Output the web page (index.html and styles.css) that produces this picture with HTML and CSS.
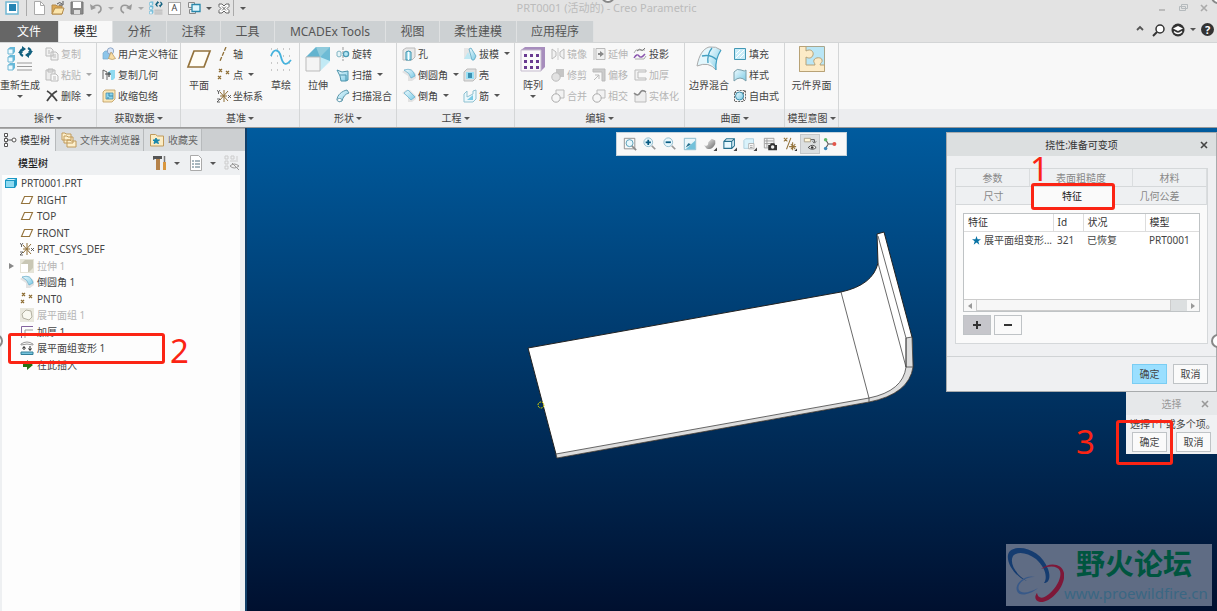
FILE: index.html
```html
<!DOCTYPE html>
<html lang="zh-CN">
<head>
    <meta charset="UTF-8">
    <meta name="viewport" content="width=device-width, initial-scale=1.0">
    <title>PRT0001 (活动的) - Creo Parametric</title>
    <link rel="stylesheet" href="styles.css">
</head>
<body>
    <!-- Shared icons -->
    <svg class="sprite" aria-hidden="true">
        <defs>
            <linearGradient id="sky" x1="0" y1="0" x2="1" y2="1"><stop offset="0" stop-color="#f0fbfe"/><stop offset="1" stop-color="#7ccbe6"/></linearGradient>
            <linearGradient id="metal" x1="0" y1="0" x2="1" y2="1"><stop offset="0" stop-color="#fff"/><stop offset="1" stop-color="#666"/></linearGradient>
        </defs>
        <symbol id="regen" viewBox="0 0 26 26">
            <path d="M1 3l2-2h5v5l-2 2H1zM1 11l2-2h5v5l-2 2H1zM1 19l2-2h5v5l-2 2H1z" fill="#66b9da"/>
            <path d="M1 3h5v5H1zM1 11h5v5H1zM1 19h5v5H1z" fill="#eefaff" stroke="#6fb7d4"/>
            <path d="M10 17h15M10 20.500h15M10 24h15" stroke="#999" stroke-width="1.200"/>
            <path d="M16 10c-4-2-3-6 0-7M21 2c4 2 3 6 0 7" fill="none" stroke="#12607f" stroke-width="2.200"/>
            <path d="M15 0l4 3-4 3zM22 6l-4 3 4 3zM11 7h5l-2.500-3zM21 5h5l-2.500 3z" fill="#12607f"/>
        </symbol>
        <symbol id="copy" viewBox="0 0 14 14"><path d="M1 1h5l2 2v6H1zM6 5h5l2 2v6H6z" fill="#f2f2f2" stroke="#bbb"/><path d="M8 8h3M8 10h3M3 4h2M3 6h2" stroke="#bbb"/></symbol>
        <symbol id="paste" viewBox="0 0 14 14"><path d="M1 2h9v10H1zM3 1h5v3H3z" fill="#ececec" stroke="#bbb"/><path d="M6 6h5l2 2v5H6z" fill="#fafafa" stroke="#bbb"/><path d="M8 9h3M8 11h3" stroke="#bbb"/></symbol>
        <symbol id="delete" viewBox="0 0 14 14"><path d="M2 2c4 2 7 6 10 10M12 2C8 4 4 9 2 12" fill="none" stroke="#444" stroke-width="1.800"/></symbol>
        <symbol id="udf" viewBox="0 0 14 14"><path d="M1 6l2-2h5v6l-2 2H1z" fill="#8cc5ea" stroke="#7aabca" stroke-width=".7"/><circle cx="8.500" cy="4" r="3.200" fill="#d9e5f6" stroke="#7b97bb" stroke-width=".8"/><path d="M9 5l4.500 6.500q-3 2-7 0z" fill="#f8dca3" stroke="#b5925a" stroke-width=".7"/></symbol>
        <symbol id="copygeom" viewBox="0 0 14 14"><path d="M1 2v9M1 2l4 2v8" fill="none" stroke="#666"/><path d="M6 4l3-2h4v8l-2 2H9V7H6z" fill="#8fdaf0"/><path d="M3 6h6M7 4v5" stroke="#444" stroke-width="1.200" fill="none"/></symbol>
        <symbol id="shrink" viewBox="0 0 14 14"><path d="M1 3l2-2h10v9l-3 3H1z" fill="#fae7b8" stroke="#bd9b5a" stroke-width=".8"/><path d="M4 4h7v6H4z" fill="#8bd4ed" stroke="#4891ae" stroke-width=".8"/><path d="M7 4v3h4M6 10V8" stroke="#3a87a6" fill="none"/></symbol>
        <symbol id="plane" viewBox="0 0 26 26"><path d="M8 5h16l-6 16H2z" fill="#fffdf6" stroke="#94733c" stroke-width="1.700"/></symbol>
        <symbol id="miniplane" viewBox="0 0 14 14"><path d="M4.500 3.500h8l-3 7h-8z" fill="#fff" stroke="#94733c" stroke-width="1.100"/></symbol>
        <symbol id="axis" viewBox="0 0 14 14"><path d="M9 0L3 14" stroke="#8f6f36" stroke-width="1.300" stroke-dasharray="4 1.500"/></symbol>
        <symbol id="points" viewBox="0 0 14 14"><path d="M2 1l3 3m0-3L2 4M9 3l3 3m0-3L9 6M1 8l3 3m0-3l-3 3" stroke="#8f6f36" stroke-width="1.300"/></symbol>
        <symbol id="csys" viewBox="0 0 14 14"><path d="M7 1v12M3 3l8 9M11 2L3 11M3 7h7" stroke="#8f6f36" stroke-width="1"/><path d="M0 1l1.500 2L3 1M1.500 3v2M0 10h3l-3 3h3M11 6l3 3m0-3l-3 3" fill="none" stroke="#444" stroke-width=".8"/></symbol>
        <symbol id="sketch" viewBox="0 0 26 26"><path d="M3 3h20M3 10h20M3 17h20M3 24h20" stroke="#999" stroke-width="1" stroke-dasharray="1 5"/><path d="M3 10c3-8 8-7 10 1s5 9 10 3" fill="none" stroke="#45b2dd" stroke-width="1.800"/></symbol>
        <symbol id="extrude" viewBox="0 0 26 26"><path d="M1 11L11 1h14v15L15 25H1z" fill="#d9f2fa"/><path d="M1 11L11 1h14L15 11z" fill="#64b4cf"/><path d="M11 1h14v14l-10-4z" fill="#90cbdc"/><path d="M25 3v12L15 25V11z" fill="#c2eaf5"/><path d="M15 11L25 1v14z" fill="#6ebbd5"/><path d="M1 11h14v14H1z" fill="#f4f4f4" stroke="#bbb"/></symbol>
        <symbol id="revolve" viewBox="0 0 14 14"><path d="M7 0v14" stroke="#999" stroke-dasharray="3 1"/><path d="M1 5q2-2 4 0v4q-2 2-4 0z" fill="#e5f5f8" stroke="#84b5c3"/><circle cx="10" cy="7" r="2.600" fill="#b5e6f4" stroke="#4b9ab4" stroke-width="1.300"/></symbol>
        <symbol id="sweep" viewBox="0 0 14 14"><path d="M1 2l5 2 6-1v9l-2 1H5L4 8z" fill="url(#sky)" stroke="#4c93ab"/><path d="M4 7h6v6" fill="none" stroke="#4c93ab"/></symbol>
        <symbol id="blend" viewBox="0 0 14 14"><path d="M1 11c0-5 5-9 10-10l2 3C9 5 7 8 6 12q-3 2-5-1z" fill="url(#sky)" stroke="#5b96aa"/><ellipse cx="3.500" cy="11" rx="2.500" ry="1.500" fill="#fff" stroke="#5b96aa" stroke-width=".8"/></symbol>
        <symbol id="hole" viewBox="0 0 14 14"><path d="M1 3l3-2h9v9l-3 3H1z" fill="#e9e9e9" stroke="#bbb"/><path d="M4 5q2.500-2 5 0v8H4z" fill="#b4e7f5" stroke="#3b91ac"/><path d="M6.500 5v8" stroke="#fff"/></symbol>
        <symbol id="round" viewBox="0 0 14 14"><path d="M0 4l4-3h5l5 5v4l-4 3H6V8z" fill="#e2e2e2"/><path d="M2 2q9-3 11 6l-4 2Q8 5 2 2z" fill="url(#sky)" stroke="#61aecb" stroke-width=".7"/></symbol>
        <symbol id="chamfer" viewBox="0 0 14 14"><path d="M0 4l4-3h4l6 6v3l-4 3H6V8z" fill="#e2e2e2"/><path d="M2 4l4-3 7 7-4 3z" fill="url(#sky)" stroke="#61aecb" stroke-width=".7"/></symbol>
        <symbol id="draft" viewBox="0 0 14 14"><path d="M1 1h6l6 9v2H1z" fill="#e6e6e6"/><path d="M1 12l4-7 4 7z" fill="#bfe8f3"/><path d="M6 2l2-1 5 8-2 4H9z" fill="url(#sky)" stroke="#5ba8c4" stroke-width=".8"/></symbol>
        <symbol id="shell" viewBox="0 0 14 14"><path d="M1 4l3-3h9v9l-3 3H1z" fill="#e0e0e0" stroke="#bbb"/><path d="M3 4h8v7H3z" fill="#9ae0f5"/><path d="M5 5h4v5H5z" fill="#3c90b1"/></symbol>
        <symbol id="rib" viewBox="0 0 14 14"><path d="M1 5l3-3v6l6-3V2l3-1v9l-3 3H1z" fill="#ebf8fc" stroke="#8fc1d1"/><path d="M4 11l6-5v5z" fill="#79cae5"/></symbol>
        <symbol id="pattern" viewBox="0 0 26 26"><path d="M1 4l4-3h20v20l-4 4z" fill="#a78dbd"/><path d="M1 4h20v21H1z" fill="#fafafa" stroke="#c5bbce"/><path d="M4 8h3v3H4zM10 8h3v3h-3zM16 8h3v3h-3zM4 14h3v3H4zM10 14h3v3h-3zM16 14h3v3h-3zM4 20h3v3H4zM10 20h3v3h-3zM16 20h3v3h-3z" fill="#693b91"/></symbol>
        <symbol id="mirror" viewBox="0 0 14 14"><path d="M1 2l4 3v4l-4 3zM13 2L9 5v4l4 3z" fill="#f2f2f2" stroke="#bbb"/><path d="M7 1v12" stroke="#ccc"/></symbol>
        <symbol id="trim" viewBox="0 0 14 14"><path d="M5 1h8v8H5z" fill="#c5c5c5"/><circle cx="5" cy="9" r="4.200" fill="#e2e2e2" stroke="#bbb"/></symbol>
        <symbol id="merge" viewBox="0 0 14 14"><path d="M5 1h8v8H5z" fill="#f2f2f2" stroke="#bbb"/><circle cx="5" cy="9" r="4.200" fill="#f6f6f6" stroke="#aaa"/></symbol>
        <symbol id="extend" viewBox="0 0 14 14"><path d="M2 1v12M4 1.500h9v11H4z" fill="#f0f0f0" stroke="#bbb"/><path d="M6 6h2V4l4 3-4 3V8H6z" fill="#888"/></symbol>
        <symbol id="offset" viewBox="0 0 14 14"><path d="M1 1h12v12h-3V4H1z" fill="#ccc" stroke="#bbb"/><path d="M2 12l5-5M3 7h4v4" fill="none" stroke="#bbb"/></symbol>
        <symbol id="project" viewBox="0 0 14 14"><path d="M1 6l2-3h9M2 12h9l2-3" fill="none" stroke="#aaa"/><path d="M4 4q3-3 4-1t4-2" fill="none" stroke="#777"/><path d="M1 11q3-5 5-2t6-2" fill="none" stroke="#8a55ae" stroke-width="1.400"/></symbol>
        <symbol id="thicken" viewBox="0 0 14 14"><path d="M13 2H2v10h11v-2H5V4h8z" fill="#f2f2f2" stroke="#bbb"/></symbol>
        <symbol id="thickenon" viewBox="0 0 14 14"><path d="M13 1.500H1.500V13" fill="none" stroke="#84649f"/><path d="M13 5H5v8" fill="none" stroke="#999"/></symbol>
        <symbol id="solidify" viewBox="0 0 14 14"><path d="M2 13V5q3 2 5-2t6 1v9z" fill="#eee" stroke="#bbb"/><path d="M1 4q4 4 6 0t6-1" fill="none" stroke="#888" stroke-width="1.500"/></symbol>
        <symbol id="boundary" viewBox="0 0 26 26"><path d="M1 20C3 9 7 3 13 1q7-1 12 3-6 9-5 20-7-9-19-4z" fill="#e3f7fd"/><path d="M13 15Q13 8 17 2q5 0 8 2-6 9-5 20-3-5-7-9z" fill="url(#sky)"/><path d="M1 20C3 9 7 3 13 1q7-1 12 3M1 20q12-5 19 4" fill="none" stroke="#aaa"/><path d="M6 10q9-2 15 4M16 2q-5 6-4 15M25 4q-6 9-5 20" fill="none" stroke="#429fc1" stroke-width="1.300"/></symbol>
        <symbol id="fill" viewBox="0 0 14 14"><path d="M1.500 1.500h11v11h-11z" fill="#c8ecf8" stroke="#4298b5"/><path d="M3 7l4-4M3 11l8-8M7 11l4-4" stroke="#fff"/></symbol>
        <symbol id="style" viewBox="0 0 14 14"><path d="M1 13V4q3-4 7-2t5 0v11q-6-6-12 0z" fill="url(#sky)" stroke="#7b9faa"/></symbol>
        <symbol id="free" viewBox="0 0 14 14"><path d="M1.500 3.500l2-2h9v9l-2 2h-9zM1.500 3.500h9v9M10.500 3.500l2-2" fill="none" stroke="#666" stroke-dasharray="2 1"/><circle cx="6.500" cy="7" r="4" fill="url(#sky)" stroke="#3b8dac"/></symbol>
        <symbol id="component" viewBox="0 0 26 26"><path d="M.5.5h25v25H.5z" fill="#b9e6f6" stroke="#a9a68c"/><path d="M.5.5H7V5c5-3 8 1 7 4s-4 4-7 2v8h9c0-2-2-3-1-5 1-3 8-3 8 0 1 2-2 3-2 5h4.500v6.500H.5z" fill="#fcebc7" stroke="#b8a276"/></symbol>
        <symbol id="parttree" viewBox="0 0 14 14"><path d="M1.500.5h3v3h-3zM1.500 5.500h3v3h-3zM1.500 10.500h3v3h-3z" fill="#fff" stroke="#555"/><circle cx="11" cy="7" r="2" fill="#fff" stroke="#555"/><path d="M5 7h4M3 4v1M3 9v1" stroke="#555"/></symbol>
        <symbol id="folders" viewBox="0 0 16 16"><path d="M1 1h3l1 1h5v6H1zM3 4h3l1 1h5v6H3zM6 8h3l1 1h5v6H6z" fill="#fdf0cd" stroke="#c09a5b"/></symbol>
        <symbol id="fav" viewBox="0 0 16 16"><path d="M1.500 2.500h5l2 1.500h6v10h-13z" fill="#fbecc4" stroke="#c09a5b"/><path d="M7 6l1 2h2.500L8.500 9.500l1 2L7 10.500l-2 1 .5-2L4 8h2z" fill="#1686ac" stroke="#1686ac"/></symbol>
        <symbol id="tools" viewBox="0 0 16 16"><path d="M4 4h4v11H4z" fill="#b5824a"/><path d="M1 1h9v3H3L1 5z" fill="#555"/><path d="M12.500 1v6" stroke="#777" stroke-width="1.500"/><path d="M11 7h3v8h-3z" fill="#d9973f"/></symbol>
        <symbol id="listdoc" viewBox="0 0 16 16"><path d="M2.500.5h8l3 3v12h-11z" fill="#fff" stroke="#aaa"/><path d="M4 6h2M7 6h5M4 9h2M7 9h5M4 12h2M7 12h5" stroke="#53717e"/></symbol>
        <symbol id="treeeye" viewBox="0 0 16 16"><path d="M1 1h3v3H1zM1 6h3v3H1zM1 11h3v3H1zM7 1h3v3H7zM13 1v6M6 6h6" fill="none" stroke="#ccc"/><path d="M6 11q4-4 9 0-5 4-9 0zM8 8l7 7" fill="#eee" stroke="#999"/></symbol>
        <symbol id="cube" viewBox="0 0 14 14"><path d="M1 4l3-2h9v7l-2 3H1z" fill="#1b98c4"/><path d="M2 5h8v6H2z" fill="#8fdaf0"/><path d="M2 4l2-1h8l-2 1z" fill="#d4f2fb"/></symbol>
        <symbol id="extrudeoff" viewBox="0 0 14 14"><path d="M0 0h14v14H0z" fill="#e5e4d8"/><path d="M1 5l4-4h8v8l-4 4H1z" fill="#c9c7b5"/><path d="M1 5h7v8H1z" fill="#fff"/></symbol>
        <symbol id="quilt" viewBox="0 0 14 14"><path d="M0 0h14v14H0z" fill="#e9e8de"/><path d="M2 6l4-4 5 1 1 6-3 3-6-2z" fill="#f8f8f0" stroke="#b3b1a2"/></symbol>
        <symbol id="flatform" viewBox="0 0 14 14"><path d="M1 3q6-4 12 0v1q-6-2-12 0z" fill="#fff" stroke="#999"/><path d="M4 9V6M2.500 7.500L4 5.500l1.500 2M10 5v4M8.500 7.500l1.500 2 1.500-2" stroke="#222" fill="none"/><path d="M1 11h12v2.500H1z" fill="#76c5df" stroke="#327e98"/></symbol>
        <symbol id="insert" viewBox="0 0 14 14"><path d="M3 5h4V2l6 5-6 5V9H3z" fill="#267314"/></symbol>
        <symbol id="zoomfit" viewBox="0 0 16 16"><path d="M1.500 1.500h12v12h-12z" fill="none" stroke="#888"/><circle cx="7.500" cy="7" r="4" fill="#e8f7fc" stroke="#4c98b3"/><path d="M10 10l5 5" stroke="#8b8b8b" stroke-width="2"/></symbol>
        <symbol id="zoomin" viewBox="0 0 16 16"><circle cx="6" cy="6" r="5" fill="#e8f7fc" stroke="#88b6c9"/><path d="M3 6h6M6 3v6" stroke="#075a83" stroke-width="2"/><path d="M10 10l4 4" stroke="#999" stroke-width="2"/></symbol>
        <symbol id="zoomout" viewBox="0 0 16 16"><circle cx="6" cy="6" r="5" fill="#e8f7fc" stroke="#88b6c9"/><path d="M3 6h6" stroke="#075a83" stroke-width="2"/><path d="M10 10l4 4" stroke="#999" stroke-width="2"/></symbol>
        <symbol id="repaint" viewBox="0 0 16 16"><path d="M1.500 1.500h13v13h-13z" fill="#eaf7fb" stroke="#85b7c9"/><path d="M14 4v10H3z" fill="#73c1da"/><path d="M14 2l-6 7-5 3 3-5 3 1z" fill="#246f8d"/></symbol>
        <symbol id="render" viewBox="0 0 16 16"><path d="M1 9q5 3 5-3l4-4 4 2v4q-4 8-10 5z" fill="url(#metal)"/><path d="M16 12v4h-4z" fill="#444"/></symbol>
        <symbol id="shade" viewBox="0 0 16 16"><path d="M1 5l3-3h9v8l-3 3H1zM1 5h9v8M10 5l3-3" fill="#e8f9ff" stroke="#246f8d" stroke-width="1.200"/><path d="M16 12v4h-4z" fill="#444"/></symbol>
        <symbol id="saved" viewBox="0 0 16 16"><path d="M1 4l2-2h9v8l-2 3H1z" fill="#d9f2fb" stroke="#a9cddb"/><path d="M6.500 7.500h6v6h-6z" fill="#fff" stroke="#aaa"/><path d="M8 10h3M8 12h3" stroke="#999"/><path d="M16 12v4h-4z" fill="#444"/></symbol>
        <symbol id="viewmgr" viewBox="0 0 16 16"><path d="M1.500 1.500h11v11h-11zM2 4.500h10M2 7.500h10M4.500 2v10" fill="#f4f4f4" stroke="#999"/><path d="M6 9h2l1-2h4l1 2h2v6H6z" fill="#333"/><circle cx="11" cy="11.500" r="2" fill="#eee"/></symbol>
        <symbol id="datums" viewBox="0 0 16 16"><path d="M1 1l4 4m0-4L1 5M9 1L4 14M7 11h8M9 8l5 6M14 8l-5 6M11 6v9" stroke="#94733c" stroke-width="1.200"/><path d="M16 13v3h-3z" fill="#333"/></symbol>
        <symbol id="annot" viewBox="0 0 16 16"><path d="M1.500 1.500h7v4h-7z" fill="#fff6d9" stroke="#a59d88"/><path d="M9 3h4v3M11 5l2 2 2-2" fill="none" stroke="#444"/><path d="M6 12q5-5 9 0-4 4-9 0z" fill="#fff" stroke="#333"/><circle cx="10.500" cy="12" r="1.500" fill="#333"/></symbol>
        <symbol id="spin" viewBox="0 0 16 16"><path d="M6 8L3 3M6 8L3 13M6 8h7" stroke="#555" stroke-width="1.200"/><circle cx="3" cy="3" r="2" fill="#5fb96b"/><circle cx="3" cy="13" r="2" fill="#3d88b7"/><circle cx="13" cy="8" r="2.300" fill="#e3564b"/></symbol>
        <symbol id="window" viewBox="0 0 14 14"><path d="M1 1h12v12H1z" fill="#fff" stroke="#72b8d3" stroke-width="1.500"/><path d="M4 3h7v7H4z" fill="#2584b3"/></symbol>
        <symbol id="new" viewBox="0 0 14 14"><path d="M2.500.5h6l4 4v9h-10z" fill="#fff" stroke="#aaa"/><path d="M8.500.5v4h4" fill="none" stroke="#aaa"/></symbol>
        <symbol id="open" viewBox="0 0 14 14"><path d="M1 4h4l1 1h5v8H1z" fill="#dca956" stroke="#b38b4c"/><path d="M1 13l3-6h9l-2 6z" fill="#fbe5ab" stroke="#b38b4c"/><path d="M6 3q3-3 5 0M12 0v4H8" stroke="#555" fill="none"/></symbol>
        <symbol id="save" viewBox="0 0 14 14"><path d="M1 1h12v12H1z" fill="#8a8a8a" stroke="#777"/><path d="M3 1h8v6H3z" fill="#fff"/><path d="M4 9h6v4H4z" fill="#ddd"/></symbol>
        <symbol id="undo" viewBox="0 0 14 14"><path d="M3 8c2-5 9-5 9 0 0 2-1 3-3 4" fill="none" stroke="#999" stroke-width="1.600"/><path d="M1 3l1 6 5-2z" fill="#999"/></symbol>
        <symbol id="redo" viewBox="0 0 14 14"><path d="M11 8C9 3 2 3 2 8c0 2 1 3 3 4" fill="none" stroke="#999" stroke-width="1.600"/><path d="M13 3l-1 6-5-2z" fill="#999"/></symbol>
        <symbol id="windows" viewBox="0 0 14 14"><path d="M1.500 1.500h6v5h-6zM2.500 8.500h6v4h-6z" fill="#eee" stroke="#888"/><path d="M5 3.500h8v7H5z" fill="#dff5fc" stroke="#2787ac" stroke-width="1.300"/></symbol>
        <symbol id="closewin" viewBox="0 0 14 14"><path d="M2 3h3l2 2 2-2h3v2.500l-2 2 2 2V12H9l-2-2-2 2H2V9.500l2-2-2-2z" fill="#fff" stroke="#666"/><path d="M5 5.500l4 4M9 5.500l-4 4" stroke="#666"/></symbol>
        <symbol id="close" viewBox="0 0 14 14"><path d="M4 4l6 6M10 4l-6 6" stroke="currentColor" stroke-width="1.600"/></symbol>
    </svg>

    <header class="titlebar">
        <div class="quick">
            <button class="app" aria-label="窗口"><svg><use href="#window"/></svg></button>
            <button aria-label="新建"><svg><use href="#new"/></svg></button>
            <button aria-label="打开"><svg><use href="#open"/></svg></button>
            <button aria-label="保存"><svg><use href="#save"/></svg></button>
            <button aria-label="撤消"><svg><use href="#undo"/></svg></button>
            <button class="more off" aria-label="撤消列表"><i class="caret"></i></button>
            <button aria-label="重做"><svg><use href="#redo"/></svg></button>
            <button class="more off" aria-label="重做列表"><i class="caret"></i></button>
            <button aria-label="重新生成"><svg><use href="#regen"/></svg></button>
            <button class="letter">A</button>
            <button aria-label="窗口列表"><svg><use href="#windows"/></svg></button>
            <button class="more" aria-label="更多窗口"><i class="caret"></i></button>
            <button aria-label="关闭窗口"><svg><use href="#closewin"/></svg></button>
            <button class="more custom" aria-label="自定义"><i class="caret"></i></button>
        </div>
        <h1>PRT0001 (活动的) - Creo Parametric</h1>
        <div class="winbtns">
            <button aria-label="最小化"><svg viewBox="0 0 14 14"><path d="M4 9h6" stroke="#bbb" stroke-width="2"/></svg></button>
            <button aria-label="还原"><svg viewBox="0 0 14 14"><path d="M5.500 3.500h6v4h-6zM3.500 5.500h6v4h-6z" fill="#e3e3e3" stroke="#b5babd"/></svg></button>
            <button aria-label="关闭"><svg><use href="#close"/></svg></button>
        </div>
    </header>

    <nav class="tabs">
        <button class="file">文件</button>
        <button class="active">模型</button>
        <button>分析</button>
        <button>注释</button>
        <button>工具</button>
        <button class="wide">MCADEx Tools</button>
        <button>视图</button>
        <button class="mid">柔性建模</button>
        <button class="mid">应用程序</button>
        <div class="help">
            <button aria-label="折叠"><svg viewBox="0 0 14 14"><path d="M4 7l3-3 3 3" fill="none" stroke="#555" stroke-width="1.800"/></svg></button>
            <button aria-label="搜索"><svg viewBox="0 0 14 14"><circle cx="8" cy="6" r="4" fill="#fff" stroke="#333" stroke-width="1.500"/><path d="M5 9l-4 4" stroke="#333" stroke-width="2"/></svg></button>
            <button aria-label="社区"><svg viewBox="0 0 14 14"><circle cx="7" cy="7" r="6.500" fill="#333"/><path d="M2 5.500L7 3l5 2.500L7 8z" fill="#fff"/><path d="M3 8.500q4 4 8 0" fill="none" stroke="#fff" stroke-width="1.300"/></svg></button>
            <button class="more" aria-label="社区列表"><i class="caret"></i></button>
            <button class="round">?</button>
        </div>
    </nav>

    <section class="ribbon">
        <div class="group g-ops">
            <div class="tools">
                <button class="big"><svg><use href="#regen"/></svg>重新生成<i class="caret"></i></button>
                <div class="col">
                    <button disabled><svg><use href="#copy"/></svg>复制</button>
                    <button disabled><svg><use href="#paste"/></svg>粘贴<i class="caret"></i></button>
                    <button><svg><use href="#delete"/></svg>删除<i class="caret"></i></button>
                </div>
            </div>
            <button class="label">操作<i class="caret"></i></button>
        </div>
        <div class="group g-data">
            <div class="tools">
                <div class="col">
                    <button><svg><use href="#udf"/></svg>用户定义特征</button>
                    <button><svg><use href="#copygeom"/></svg>复制几何</button>
                    <button><svg><use href="#shrink"/></svg>收缩包络</button>
                </div>
            </div>
            <button class="label">获取数据<i class="caret"></i></button>
        </div>
        <div class="group g-datum">
            <div class="tools">
                <button class="big"><svg><use href="#plane"/></svg>平面</button>
                <div class="col">
                    <button><svg><use href="#axis"/></svg>轴</button>
                    <button><svg><use href="#points"/></svg>点<i class="caret"></i></button>
                    <button><svg><use href="#csys"/></svg>坐标系</button>
                </div>
                <button class="big"><svg><use href="#sketch"/></svg>草绘</button>
            </div>
            <button class="label">基准<i class="caret"></i></button>
        </div>
        <div class="group g-shape">
            <div class="tools">
                <button class="big"><svg><use href="#extrude"/></svg>拉伸</button>
                <div class="col">
                    <button><svg><use href="#revolve"/></svg>旋转</button>
                    <button><svg><use href="#sweep"/></svg>扫描<i class="caret"></i></button>
                    <button><svg><use href="#blend"/></svg>扫描混合</button>
                </div>
            </div>
            <button class="label">形状<i class="caret"></i></button>
        </div>
        <div class="group g-eng">
            <div class="tools">
                <div class="col">
                    <button><svg><use href="#hole"/></svg>孔</button>
                    <button><svg><use href="#round"/></svg>倒圆角<i class="caret"></i></button>
                    <button><svg><use href="#chamfer"/></svg>倒角<i class="caret"></i></button>
                </div>
                <div class="col">
                    <button><svg><use href="#draft"/></svg>拔模<i class="caret"></i></button>
                    <button><svg><use href="#shell"/></svg>壳</button>
                    <button><svg><use href="#rib"/></svg>筋<i class="caret"></i></button>
                </div>
            </div>
            <button class="label">工程<i class="caret"></i></button>
        </div>
        <div class="group g-edit">
            <div class="tools">
                <button class="big"><svg><use href="#pattern"/></svg>阵列<i class="caret"></i></button>
                <div class="col">
                    <button disabled><svg><use href="#mirror"/></svg>镜像</button>
                    <button disabled><svg><use href="#trim"/></svg>修剪</button>
                    <button disabled><svg><use href="#merge"/></svg>合并</button>
                </div>
                <div class="col">
                    <button disabled><svg><use href="#extend"/></svg>延伸</button>
                    <button disabled><svg><use href="#offset"/></svg>偏移</button>
                    <button disabled><svg><use href="#merge"/></svg>相交</button>
                </div>
                <div class="col">
                    <button><svg><use href="#project"/></svg>投影</button>
                    <button disabled><svg><use href="#thicken"/></svg>加厚</button>
                    <button disabled><svg><use href="#solidify"/></svg>实体化</button>
                </div>
            </div>
            <button class="label">编辑<i class="caret"></i></button>
        </div>
        <div class="group g-surf">
            <div class="tools">
                <button class="big"><svg><use href="#boundary"/></svg>边界混合</button>
                <div class="col">
                    <button><svg><use href="#fill"/></svg>填充</button>
                    <button><svg><use href="#style"/></svg>样式</button>
                    <button><svg><use href="#free"/></svg>自由式</button>
                </div>
            </div>
            <button class="label">曲面<i class="caret"></i></button>
        </div>
        <div class="group g-intent">
            <div class="tools">
                <button class="big"><svg><use href="#component"/></svg>元件界面</button>
            </div>
            <button class="label">模型意图<i class="caret"></i></button>
        </div>
        <div class="group rest"><div class="tools"></div><div class="label"></div></div>
    </section>

    <main>
        <aside>
            <div class="side-tabs">
                <button class="active"><svg><use href="#parttree"/></svg>模型树</button>
                <button><svg><use href="#folders"/></svg>文件夹浏览器</button>
                <button><svg><use href="#fav"/></svg>收藏夹</button>
            </div>
            <div class="side-head">
                <h2>模型树</h2>
                <button aria-label="设置"><svg><use href="#tools"/></svg><i class="caret"></i></button>
                <button aria-label="显示"><svg><use href="#listdoc"/></svg><i class="caret"></i></button>
                <button aria-label="过滤"><svg><use href="#treeeye"/></svg></button>
            </div>
            <div class="tree-pane">
                <ul class="tree">
                    <li class="root"><svg><use href="#cube"/></svg>PRT0001.PRT</li>
                    <li><svg><use href="#miniplane"/></svg>RIGHT</li>
                    <li><svg><use href="#miniplane"/></svg>TOP</li>
                    <li><svg><use href="#miniplane"/></svg>FRONT</li>
                    <li><svg><use href="#csys"/></svg>PRT_CSYS_DEF</li>
                    <li class="off folded"><svg><use href="#extrudeoff"/></svg>拉伸 1</li>
                    <li><svg><use href="#round"/></svg>倒圆角 1</li>
                    <li><svg><use href="#points"/></svg>PNT0</li>
                    <li class="off"><svg><use href="#quilt"/></svg>展平面组 1</li>
                    <li><svg><use href="#thickenon"/></svg>加厚 1</li>
                    <li><svg><use href="#flatform"/></svg>展平面组变形 1</li>
                    <li><svg><use href="#insert"/></svg>在此插入</li>
                </ul>
            </div>
            <div class="mark mark-2"></div>
            <span class="num num-2">2</span>
        </aside>

        <section class="viewport">
            <svg class="model" viewBox="247 128 970 483" preserveAspectRatio="xMinYMin meet">
                <path d="M528 348L841 292Q873 285 878 263L877 234L884 232L912 337L913 367Q909 394 869 402L557 458z" fill="#fff" stroke="#222"/>
                <path d="M556 454L869 398Q903 391 906 367L906 338L912 337L913 367Q909 394 869 402L557 458z" fill="#ddd" stroke="#444" stroke-width=".8"/>
                <path d="M841 292L869 398V402M878 263L906 367H913M878 236L906 338L906 367" fill="none" stroke="#444" stroke-width=".8"/>
                <circle cx="541" cy="405" r="3" fill="none" stroke="#d8d800" stroke-dasharray="2 1"/>
            </svg>

            <div class="viewbar">
                <button aria-label="重新调整"><svg><use href="#zoomfit"/></svg></button>
                <button aria-label="放大"><svg><use href="#zoomin"/></svg></button>
                <button aria-label="缩小"><svg><use href="#zoomout"/></svg></button>
                <button aria-label="重画"><svg><use href="#repaint"/></svg></button>
                <button aria-label="渲染"><svg><use href="#render"/></svg></button>
                <button aria-label="显示样式"><svg><use href="#shade"/></svg></button>
                <button aria-label="已保存方向"><svg><use href="#saved"/></svg></button>
                <button aria-label="视图管理器"><svg><use href="#viewmgr"/></svg></button>
                <button aria-label="基准显示"><svg><use href="#datums"/></svg></button>
                <button class="on" aria-label="注释显示"><svg><use href="#annot"/></svg></button>
                <button aria-label="旋转中心"><svg><use href="#spin"/></svg></button>
            </div>

            <div class="dialog">
                <div class="dialog-title"><h2>挠性:准备可变项</h2><button aria-label="关闭"><svg><use href="#close"/></svg></button></div>
                <div class="panel">
                    <div class="panel-tabs row-a"><button>参数</button><button>表面粗糙度</button><button>材料</button></div>
                    <div class="panel-tabs row-b"><button>尺寸</button><button class="active">特征</button><button>几何公差</button></div>
                    <div class="list">
                        <table>
                            <thead><tr><th class="c-name">特征</th><th class="c-id">Id</th><th class="c-state">状况</th><th>模型</th></tr></thead>
                            <tbody><tr><td><svg viewBox="0 0 14 14"><path d="M7 0l1.700 5H14L9.800 8.200 11.400 13.500 7 10.300 2.600 13.500 4.200 8.200 0 5h5.300z" fill="#0873a5"/></svg>展平面组变形...</td><td>321</td><td>已恢复</td><td>PRT0001</td></tr></tbody>
                        </table>
                        <div class="scroll"><button class="left" aria-label="向左"></button><span></span><button class="right" aria-label="向右"></button></div>
                    </div>
                    <div class="edit">
                        <button class="add" aria-label="添加"><svg viewBox="0 0 14 14"><path d="M3 7h8M7 3v8" stroke="#333" stroke-width="2"/></svg></button>
                        <button aria-label="移除"><svg viewBox="0 0 14 14"><path d="M3 7h8" stroke="#333" stroke-width="2"/></svg></button>
                    </div>
                </div>
                <div class="actions"><button class="primary">确定</button><button>取消</button></div>
                <div class="mark mark-1"></div>
                <span class="num num-1">1</span>
            </div>

            <div class="select">
                <div class="dialog-title"><h2>选择</h2><button aria-label="关闭"><svg><use href="#close"/></svg></button></div>
                <p>选择1个或多个项。</p>
                <div class="select-actions"><button>确定</button><button>取消</button></div>
                <div class="mark mark-3"></div>
                <span class="num num-3">3</span>
            </div>

            <div class="watermark">
                <svg viewBox="0 0 58 62">
                    <path d="M4 7C14-1 36 7 42 25c3 8 1 14-4 14 4-6 1-16-8-24C21 8 11 7 7 12c-4 7 3 19 14 25C8 33-3 14 4 7z" fill="#153c70"/>
                    <path d="M35 25c8-7 21-6 23 4 2 13-13 30-24 29-5-1-6-5-3-9 1 6 6 6 12 1 8-7 13-17 11-23-2-5-10-6-19-2z" fill="#7e1738"/>
                    <path d="M29 33c-9-1-19 7-16 13 2 4 10 3 19-2-8 7-19 9-21 3-3-8 9-17 18-14z" fill="#385988"/>
                </svg>
                <div><strong>野火论坛</strong><a href="#">www.proewildfire.cn</a></div>
            </div>
        </section>
    </main>
    <i class="handle h-left"></i><i class="handle h-right"></i><i class="handle h-top"></i><i class="handle h-corner"></i>
</body>
</html>
```

FILE: styles.css
```css
* {
    box-sizing: border-box;
}

body {
    margin: 0;
    height: 100vh;
    display: flex;
    flex-direction: column;
    position: relative;
    overflow: hidden;
    background: #e3e3e3;
    color: #444;
    font: 10px/14px "Noto Sans", "Noto Sans CJK SC", sans-serif;
}

button {
    display: flex;
    align-items: center;
    justify-content: center;
    margin: 0;
    padding: 0;
    border: 0;
    background: none;
    color: inherit;
    font: inherit;
    white-space: nowrap;
    cursor: pointer;
}

button:disabled,
.off {
    color: #b5b5b5;
}

h1, h2, p {
    margin: 0;
    font-size: 10px;
    font-weight: normal;
}

svg {
    flex: none;
    width: 14px;
    height: 14px;
}

.sprite {
    position: absolute;
    width: 0;
    height: 0;
}

.caret {
    flex: none;
    border: 3px solid transparent;
    border-top-color: #555;
    border-bottom: 0;
}

.off .caret,
button:disabled .caret {
    border-top-color: #aaa;
}

/* Title bar */
.titlebar {
    flex: none;
    display: grid;
    grid-template-columns: 1fr auto 1fr;
    height: 21px;
    padding-bottom: 5px;
}

.quick,
.winbtns {
    display: flex;
    align-items: center;
}

.quick button {
    width: 19px;
    height: 16px;
}

.quick .app {
    width: 27px;
    margin-right: 2px;
    padding-right: 2px;
    border-right: 1px solid #aaa;
}

.quick .more {
    width: 11px;
}

.quick .custom {
    width: 18px;
    border-left: 1px solid #aaa;
}

.quick .letter {
    width: 13px;
    height: 13px;
    margin: 0 3px;
    border: 1px solid #aaa;
    background: #fff;
    font-size: 9px;
}

.titlebar h1 {
    padding-right: 4px;
    color: #bbb;
    font-size: 11px;
    line-height: 16px;
}

.winbtns {
    justify-content: flex-end;
    gap: 7px;
    padding-right: 6px;
    color: #aaa;
}

/* Ribbon tabs */
.tabs {
    flex: none;
    display: flex;
    height: 21px;
    color: #555;
    font-size: 12px;
}

.tabs > button {
    width: 54px;
    border-right: 1px solid #dfe1e2;
    background: #cdd1d3;
}

.tabs > .file {
    width: 59px;
    background: #666;
    color: #fff;
}

.tabs > .active {
    background: #f8f8f8;
    color: #222;
}

.tabs > .wide {
    width: 111px;
}

.tabs > .mid {
    width: 77px;
}

.help {
    flex: 1;
    display: flex;
    justify-content: flex-end;
    align-items: center;
    gap: 5px;
    padding: 0 3px 4px 0;
}

.help .round {
    width: 13px;
    height: 13px;
    border-radius: 50%;
    background: #333;
    color: #fff;
    font-size: 11px;
    font-weight: bold;
}

/* Ribbon */
.ribbon {
    flex: none;
    display: grid;
    grid-template-columns: 97px 84px 119px 97px 118px 170px 100px 54px 1fr;
    height: 86px;
    border-top: 1px solid #d3d5d6;
    border-bottom: 1px solid #999;
    background: #f8f8f8;
}

.group {
    display: flex;
    flex-direction: column;
    min-width: 0;
    border-right: 1px solid #d4d6d7;
}

.group.rest {
    border-right: 0;
}

.tools {
    flex: 1;
    display: grid;
    align-items: start;
}

.g-ops .tools { grid-template-columns: 40px 1fr; column-gap: 5px; }
.g-data .tools { padding-left: 5px; }
.g-datum .tools { grid-template-columns: 36px 1fr 36px; }
.g-shape .tools { grid-template-columns: 36px 1fr; }
.g-eng .tools { grid-template-columns: 61px 1fr; padding-left: 5px; }
.g-edit .tools { grid-template-columns: 36px 41px 41px 1fr; }
.g-surf .tools { grid-template-columns: 48px 1fr; }

.big {
    flex-direction: column;
    justify-content: flex-start;
    padding-top: 3px;
}

.big svg {
    width: 26px;
    height: 26px;
    margin-bottom: 6px;
}

.big .caret {
    margin-top: 3px;
}

.col button {
    gap: 2px;
    height: 21px;
}

.col .caret {
    margin-left: 3px;
}

.label {
    width: 100%;
    height: 18px;
    gap: 2px;
    background: #ecedef;
}

/* Model tree */
main {
    flex: 1;
    display: flex;
    min-height: 0;
}

aside {
    position: relative;
    flex: none;
    display: flex;
    flex-direction: column;
    width: 247px;
    padding-right: 5px;
    border-right: 2px solid #123f68;
    background: #eef0f2;
}

.side-tabs {
    display: flex;
    height: 23px;
    margin-right: -5px;
    border-top: 1px solid #aaa;
    background: #cccfd1;
    color: #666;
}

.side-tabs button {
    gap: 3px;
    padding: 0 3px 0 5px;
    border-right: 1px solid #b7babc;
    background: #dbdee0;
}

.side-tabs .active {
    padding: 0 5px 0 3px;
    background: #eef0f2;
    color: #333;
}

.side-tabs svg,
.side-head svg {
    width: 16px;
    height: 16px;
}

.side-tabs .active svg {
    width: 14px;
    height: 14px;
}

.side-head {
    display: flex;
    align-items: center;
    height: 24px;
    padding-left: 18px;
    gap: 8px;
}

.side-head h2 {
    flex: 1;
    color: #222;
    font-weight: 500;
}

.side-head button {
    gap: 6px;
}

.tree-pane {
    flex: 1;
    margin-left: 2px;
    background: #fdfdfd;
}

.tree {
    display: grid;
    grid-auto-rows: 1fr;
    height: 198px;
    margin: 0;
    padding: 0;
    list-style: none;
}

.tree li {
    position: relative;
    display: flex;
    align-items: center;
    gap: 3px;
    padding-left: 18px;
}

.tree .root {
    padding-left: 2px;
}

.tree .folded::before {
    content: "";
    position: absolute;
    left: 7px;
    border: 3px solid transparent;
    border-left: 5px solid #888;
    border-right: 0;
}

/* Graphics area */
.viewport {
    position: relative;
    flex: 1;
    overflow: hidden;
    background: linear-gradient(#005b9e, #00102f);
}

.model {
    display: block;
    width: 100%;
    height: 100%;
}

.viewbar {
    position: absolute;
    left: 369px;
    top: 4px;
    display: flex;
    padding: 1px 6px 1px 3px;
    border: 1px solid #c5d3dc;
    background: #f8f8f8;
}

.viewbar button {
    width: 20px;
    height: 20px;
}

.viewbar svg {
    width: 14px;
    height: 14px;
}

.viewbar .on {
    border: 1px solid #c4c7c9;
    background: #dcdfe0;
}

.dialog {
    position: absolute;
    top: 4px;
    right: 0;
    width: 271px;
    border: 1px solid #a8abad;
    background: #eff0f2;
}

.dialog-title {
    display: flex;
    align-items: center;
    height: 23px;
    padding: 0 5px 0 19px;
    background: #dcdfe0;
}

.dialog-title h2 {
    flex: 1;
    color: #333;
    text-align: center;
}

.panel {
    margin: 12px 8px;
    padding-bottom: 8px;
    border: 1px solid #d5d8da;
    background: #fafafa;
}

.panel-tabs {
    display: grid;
    color: #888;
}

.row-a {
    grid-template-columns: 74px 103px 1fr;
}

.row-b {
    grid-template-columns: 76px 81px 1fr;
}

.panel-tabs button {
    height: 18px;
    border-right: 1px solid #dadddf;
    border-bottom: 1px solid #d5d8da;
    background: #eef0f2;
}

.panel-tabs .active {
    border-bottom-color: #fafafa;
    background: #fafafa;
    color: #222;
}

.list {
    display: flex;
    flex-direction: column;
    height: 99px;
    margin: 8px 7px 3px;
    border: 1px solid #bfc3c5;
    background: #fff;
}

table {
    width: 100%;
    border-collapse: collapse;
    table-layout: fixed;
}

th, td {
    height: 17px;
    padding: 0 4px;
    font-weight: normal;
    text-align: left;
    white-space: nowrap;
}

th {
    border-right: 1px solid #ddd;
    border-bottom: 1px solid #ddd;
    color: #333;
}

th:last-child {
    border-right: 0;
}

td svg {
    width: 9px;
    height: 9px;
    margin: 0 3px 0 4px;
    vertical-align: -1px;
}

td:first-child {
    padding-right: 0;
}

.c-name { width: 89px; }
.c-id { width: 30px; }
.c-state { width: 62px; }

.scroll {
    display: flex;
    height: 12px;
    margin-top: auto;
    border-top: 1px solid #ccc;
    background: #dcdfe0;
}

.scroll button {
    width: 12px;
    background: #f8f8f8;
}

.scroll button::before {
    content: "";
    border: 3px solid transparent;
}

.scroll .left::before {
    border-left: 0;
    border-right: 4px solid #999;
}

.scroll .right::before {
    border-right: 0;
    border-left: 4px solid #999;
}

.scroll span {
    flex: 1;
    margin-right: 16px;
    border: 1px solid #ccc;
    border-top: 0;
    background: #f7f7f7;
}

.edit {
    display: flex;
    gap: 3px;
    padding-left: 7px;
}

.edit button,
.actions button,
.select-actions button {
    height: 20px;
    border: 1px solid #bfc3c6;
    background: #fafafa;
}

.edit button {
    width: 28px;
}

.edit .add {
    background: #c6c6cb;
}

.actions {
    display: flex;
    justify-content: flex-end;
    gap: 6px;
    padding: 7px 8px;
    border-top: 1px solid #d0d3d5;
}

.actions button,
.select-actions button {
    width: 35px;
}

.actions .primary {
    border-color: #7acdf3;
    background: #9adfff;
}

.select {
    position: absolute;
    top: 264px;
    right: 0;
    width: 91px;
    padding-bottom: 2px;
    background: #f0f1f3;
}

.select .dialog-title {
    background: #e6e8ea;
}

.select .dialog-title,
.select .dialog-title h2 {
    color: #999;
}

.select p {
    padding: 2px 0 1px 4px;
    white-space: nowrap;
}

.select-actions {
    display: flex;
    justify-content: space-between;
    padding: 0 6px;
}

.watermark {
    position: absolute;
    right: 5px;
    bottom: 5px;
    display: flex;
    width: 206px;
    height: 62px;
    background: #5f6c84;
}

.watermark svg {
    width: 58px;
    height: 62px;
}

.watermark strong {
    display: block;
    padding-left: 12px;
    color: #00553f;
    font-size: 29px;
    line-height: 40px;
}

.watermark a {
    color: #3a6783;
    font-size: 15px;
    line-height: 18px;
    text-decoration: none;
}

/* Step marks */
.mark {
    position: absolute;
    border: 3px solid #fb2414;
    border-radius: 3px;
}

.num {
    position: absolute;
    color: #fb2414;
    font-size: 33px;
    line-height: 34px;
}

.mark-1 { left: 84px; top: 50px; width: 84px; height: 27px; }
.num-1 { left: 83px; top: 19px; }
.mark-2 { left: 8px; top: 205px; width: 157px; height: 31px; }
.num-2 { left: 170px; top: 206px; }
.mark-3 { left: -10px; top: 28px; width: 57px; height: 45px; }
.num-3 { left: -50px; top: 33px; }

/* Resize handles */
.handle {
    position: absolute;
    width: 14px;
    height: 14px;
    border: 2px solid #888;
    border-radius: 50%;
    background: #fff;
}

.h-left { left: -11px; top: 334px; }
.h-right { right: -8px; top: 334px; }
.h-top { left: calc(50% - 8px); top: -11px; }
.h-corner { right: -8px; top: -10px; }
```
